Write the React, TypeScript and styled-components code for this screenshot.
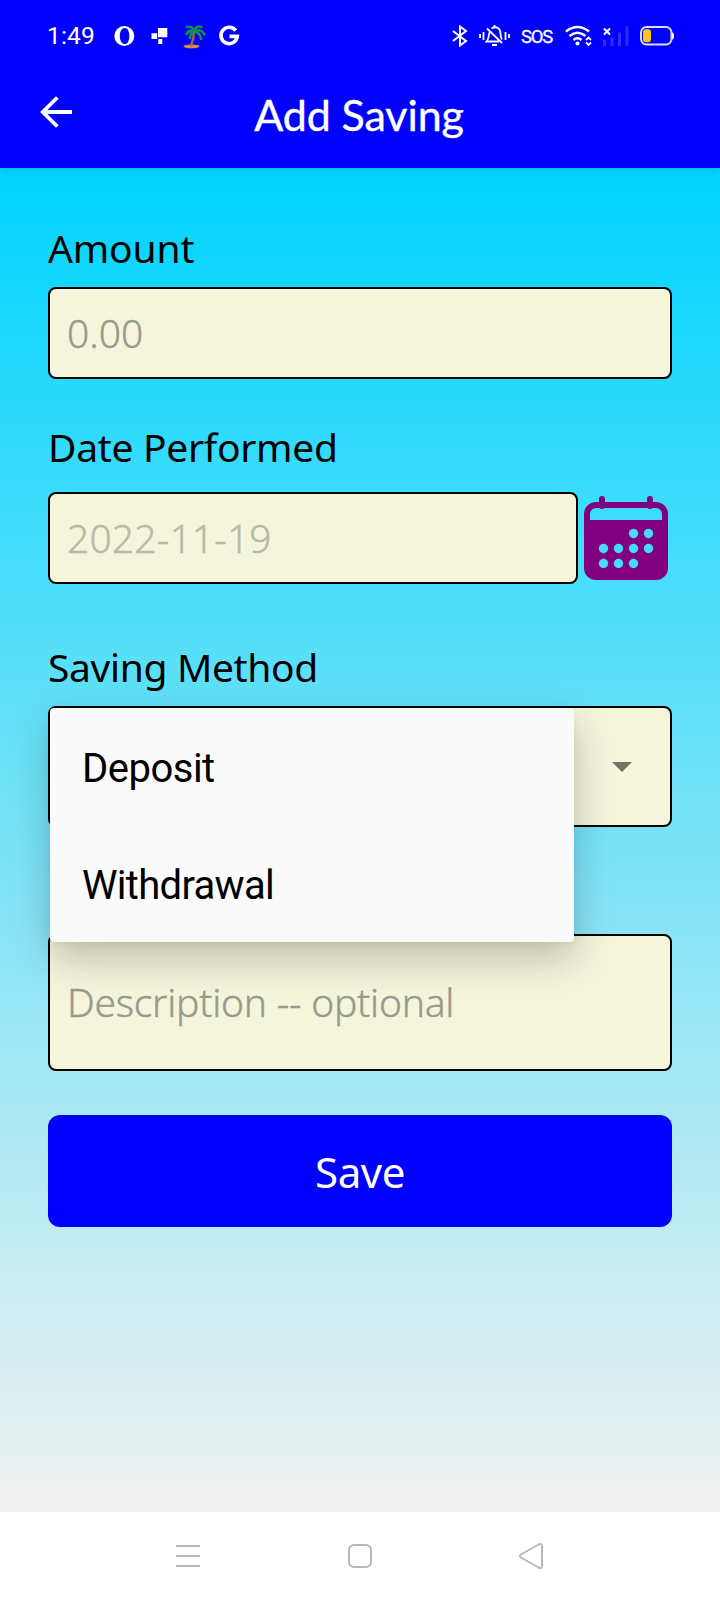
import React from 'react';
import styled, { createGlobalStyle } from 'styled-components';

const GlobalStyle = createGlobalStyle`
  *, *::before, *::after { box-sizing: border-box; }
  body { margin: 0; background: #fff; font-family: "Noto Sans", sans-serif; }
  svg { display: block; flex: none; }
`;

const Screen = styled.div`
  width: 720px;
  height: 1600px;
  display: flex;
  flex-direction: column;
  overflow: hidden;
`;

const Header = styled.header`
  flex: none;
  height: 168px;
  background: #0000ff;
  color: #fff;
  box-shadow: 0 1px 6px rgba(0, 0, 0, 0.16);
  z-index: 1;
`;

const StatusBar = styled.div`
  height: 72px;
  padding: 0 46px 0 47px;
  display: flex;
  align-items: center;
  justify-content: space-between;
`;

const StatusGroup = styled.div<{ $gap: number }>`
  display: flex;
  align-items: center;
  gap: ${(p) => p.$gap}px;
`;

const Clock = styled.span`
  width: 52px;
  font: 400 24.5px/30px Roboto, sans-serif;
  letter-spacing: 0.2px;
`;

const Sos = styled.span`
  width: 33px;
  padding-top: 2px;
  font: 400 18.5px/22px Roboto, sans-serif;
  -webkit-text-stroke: 0.3px currentColor;
  letter-spacing: -1.2px;
`;

const TitleBar = styled.div`
  height: 96px;
  padding: 0 40px;
  display: grid;
  grid-template-columns: 60px 1fr 60px;
  align-items: start;
`;

const BackButton = styled.button`
  margin: 24px 0 0;
  padding: 0;
  border: 0;
  background: none;
  color: inherit;
`;

const Title = styled.h1`
  margin: 16px 0 0;
  padding-right: 2px;
  text-align: center;
  font: 400 43px/54px Lato, sans-serif;
  -webkit-text-stroke: 0.4px currentColor;
  letter-spacing: -0.1px;
  white-space: nowrap;
`;

const Form = styled.main`
  flex: 1;
  padding: 0 48px;
  display: flex;
  flex-direction: column;
  background: linear-gradient(#00d4ff, #f2f2f0);
`;

const Label = styled.label<{ $top: number; $gap: number; $spacing: number }>`
  height: 48px;
  margin-top: ${(p) => p.$top}px;
  margin-bottom: ${(p) => p.$gap}px;
  font-size: 39px;
  line-height: 46px;
  letter-spacing: ${(p) => p.$spacing}px;
  color: #000;
  white-space: nowrap;
`;

const Field = styled.div<{ $height: number; $tone?: string; $spacing?: number }>`
  height: ${(p) => p.$height}px;
  padding: 0 17px 2px;
  display: flex;
  align-items: center;
  border: 2px solid #000;
  border-radius: 8px;
  background: #f5f5dc;
  color: ${(p) => p.$tone ?? '#999a89'};
  font-size: 39px;
  font-weight: 300;
  -webkit-text-stroke: 0.4px currentColor;
  letter-spacing: ${(p) => p.$spacing ?? 0}px;
  white-space: nowrap;
`;

const FieldRow = styled.div`
  display: flex;
  align-items: center;
  gap: 6px;
  padding-right: 4px;

  ${Field} { flex: 1; }
`;

const Stack = styled.div<{ $gap: number }>`
  display: flex;
  flex-direction: column;
  margin-top: ${(p) => p.$gap}px;
`;

const Picker = styled.div`
  position: relative;
  height: 121px;
  padding-right: 38px;
  display: flex;
  align-items: center;
  justify-content: flex-end;
  border: 2px solid #000;
  border-radius: 8px;
  background: #f5f5dc;
`;

const Menu = styled.ul`
  position: absolute;
  top: 0;
  left: 0;
  z-index: 2;
  width: 524px;
  margin: 0;
  padding: 0;
  list-style: none;
  border-radius: 4px;
  background: #fafafa;
  box-shadow: 0 16px 40px rgba(0, 0, 0, 0.23), 0 2px 6px rgba(0, 0, 0, 0.05);
`;

const MenuItem = styled.li<{ $spacing: number }>`
  height: 117px;
  padding: 3px 32px 0;
  font: 400 40px/116px Roboto, sans-serif;
  letter-spacing: ${(p) => p.$spacing}px;
  color: #000;
`;

const SaveButton = styled.button`
  height: 112px;
  margin: 44px 0 0;
  padding: 1px 0 0;
  border: 0;
  border-radius: 12px;
  background: #0000ff;
  color: #fff;
  font: 400 42px/50px "Noto Sans", sans-serif;
  letter-spacing: -0.4px;
`;

const NavBar = styled.nav`
  flex: none;
  height: 88px;
  padding: 0 175px;
  display: flex;
  align-items: center;
  justify-content: space-between;
  background: #fff;
`;

const NotificationIcons = () => (
  <svg width="130" height="30" viewBox="112 21 130 30">
    <path fill="#fff" fillRule="evenodd" d="M124.3 26a10 10 0 1 0 0 20a10 10 0 1 0 0-20ZM124.8 28c3 0 4.500 3.500 4.500 8s-1.500 8-4.500 8s-5-3.500-5-8s2-8 5-8Z" />
    <path fill="#fff" d="M158 28h9.300v9.300H158zM151.500 33.300h5.700v5.700h-5.700zM158.300 39h4v5h-4z" />
    <ellipse cx="191.500" cy="46.300" rx="8" ry="1.900" fill="#d99042" />
    <path d="M190.500 46c2-4 4-8 3-14" stroke="#a66b42" strokeWidth="2.400" fill="none" />
    <g fill="none" stroke="#168b50" strokeWidth="2.600" strokeLinecap="round">
      <path d="M194.500 31.500c-3-1.500-6-1-8 2.500M194.500 31.500c-3 1-4.500 3-4.500 6.500M194.500 31.500c-1-4-4-5.500-7.500-4.500M194.500 31c0-3 3-5.500 7-4M195 31.500c3-2 7-1.500 9.500 3M195 32c3.500.5 5.500 3 6 7" />
    </g>
    <path d="M235.800 30.600A8.200 8.200 0 1 0 237.300 36.400H229.500" fill="none" stroke="#fff" strokeWidth="3.600" />
  </svg>
);

const BluetoothIcon = () => (
  <svg width="16" height="22" viewBox="0 0 16 22" fill="none" stroke="#fff" strokeWidth="2">
    <path d="m1 6 13 10-6 4.500v-19L14 6 1 16" />
  </svg>
);

const BellOffIcon = () => (
  <svg width="31" height="22" viewBox="0 0 31 22" fill="none" stroke="#fff" strokeWidth="1.800">
    <path d="M1 9v4M4.500 7v8M26.500 7v8M30 9v4M8 3.500l15 14.500M10.500 7C10 11 9.500 14 7.500 16.500H20M12.500 3.500c5-3 9 0 9 5 0 3 .5 4.500 1.500 6M15.500 0v3M13 20h5" />
  </svg>
);

const WifiIcon = () => (
  <svg width="27" height="22" viewBox="0 0 27 22" fill="none" stroke="#fff" strokeWidth="2.500">
    <path d="M1 6.500Q12.500-2.500 24 6.500M4.500 11Q12.500 4.500 20.500 11M8.500 15Q12.500 11.500 16.500 15" />
    <circle cx="12.500" cy="18.500" r="2" fill="#fff" stroke="none" />
    <path d="m21 15 2.500-2.500L26 15M21 17.500l2.500 2.500 2.500-2.500" strokeWidth="1.800" />
  </svg>
);

const SignalIcon = () => (
  <svg width="26" height="22" viewBox="0 0 26 22">
    <path d="M0 15h3v6H0zM7.500 12.500h3V21h-3zM15 7.500h3V21h-3zM22.500 1h3v20h-3z" fill="#2d2dff" />
    <path d="m1 3.500 6 6m0-6-6 6" stroke="#fff" strokeWidth="2" />
  </svg>
);

const BatteryIcon = () => (
  <svg width="34" height="20" viewBox="0 0 34 20">
    <rect x="1" y="1" width="30.500" height="17.500" rx="5.500" fill="none" stroke="#dcdcff" strokeWidth="2" />
    <rect x="3" y="3.300" width="8" height="13" rx="3" fill="#ffc61a" />
    <path d="M32 6.500q2 0 2 3.500t-2 3.500z" fill="#fff" />
  </svg>
);

const BackIcon = () => (
  <svg width="33" height="32" viewBox="0 0 33 32" fill="none" stroke="#fff" strokeWidth="3.800">
    <path d="M32 16H3M17.300 1.500 2.800 16l14.500 14.500" />
  </svg>
);

const CalendarIcon = () => (
  <svg width="84" height="84" viewBox="0 0 84 84">
    <path d="M18 10V3m48 7V3" stroke="purple" strokeWidth="6" strokeLinecap="round" />
    <path
      fill="purple"
      fillRule="evenodd"
      d="M12 6h60a12 12 0 0 1 12 12v54a12 12 0 0 1-12 12H12A12 12 0 0 1 0 72V18A12 12 0 0 1 12 6ZM12 12a6 6 0 0 0-6 6v6h72v-6a6 6 0 0 0-6-6Z"
    />
    <g fill="#46dbfd">
      {[
        [49.5, 37.5], [64.5, 37.5],
        [19.5, 52.5], [34.5, 52.5], [49.5, 52.5], [64.5, 52.5],
        [19.5, 67.5], [34.5, 67.5], [49.5, 67.5],
      ].map(([x, y]) => (
        <circle key={`${x}-${y}`} cx={x} cy={y} r="4.700" />
      ))}
    </g>
  </svg>
);

const CaretIcon = () => (
  <svg width="20" height="10" viewBox="0 0 20 10">
    <path d="M0 0h20L10 10z" fill="#727266" />
  </svg>
);

export default function App() {
  return (
    <>
      <GlobalStyle />
      <Screen>
        <Header>
          <StatusBar>
            <StatusGroup $gap={13}>
              <Clock>1:49</Clock>
              <NotificationIcons />
            </StatusGroup>
            <StatusGroup $gap={11}>
              <BluetoothIcon />
              <BellOffIcon />
              <Sos>SOS</Sos>
              <WifiIcon />
              <SignalIcon />
              <BatteryIcon />
            </StatusGroup>
          </StatusBar>
          <TitleBar>
            <BackButton aria-label="Back"><BackIcon /></BackButton>
            <Title>Add Saving</Title>
          </TitleBar>
        </Header>
        <Form>
          <Label $top={57} $gap={14} $spacing={-0.15}>Amount</Label>
          <Field $height={92}>0.00</Field>
          <Label $top={45} $gap={20} $spacing={-0.3}>Date Performed</Label>
          <FieldRow>
            <Field $height={92} $tone="#b9b9a6" $spacing={0.15}>2022-11-19</Field>
            <CalendarIcon />
          </FieldRow>
          <Label $top={60} $gap={14} $spacing={-0.35}>Saving Method</Label>
          <Picker>
            <CaretIcon />
            <Menu>
              <MenuItem $spacing={-0.5}>Deposit</MenuItem>
              <MenuItem $spacing={-0.7}>Withdrawal</MenuItem>
            </Menu>
          </Picker>
          <Stack $gap={107}>
            <Field $height={137} $spacing={-0.25}>Description -- optional</Field>
          </Stack>
          <SaveButton>Save</SaveButton>
        </Form>
        <NavBar>
          <svg width="26" height="28" viewBox="0 0 26 28" stroke="#b8b8b8" strokeWidth="2">
            <path d="M1 4h24M1 14h24M1 24h24" />
          </svg>
          <svg width="26" height="28" viewBox="0 0 26 28" fill="none" stroke="#b8b8b8" strokeWidth="2">
            <rect x="2" y="3" width="22" height="22" rx="5" />
          </svg>
          <svg width="26" height="28" viewBox="1 0 26 28" overflow="visible" fill="none" stroke="#b8b8b8" strokeWidth="2" strokeLinejoin="round">
            <path d="M3 12.500 20.500 2.500Q24 1 24 4v20q0 3-3.500 1.500L3 15.500Q.500 14 3 12.500Z" />
          </svg>
        </NavBar>
      </Screen>
    </>
  );
}
